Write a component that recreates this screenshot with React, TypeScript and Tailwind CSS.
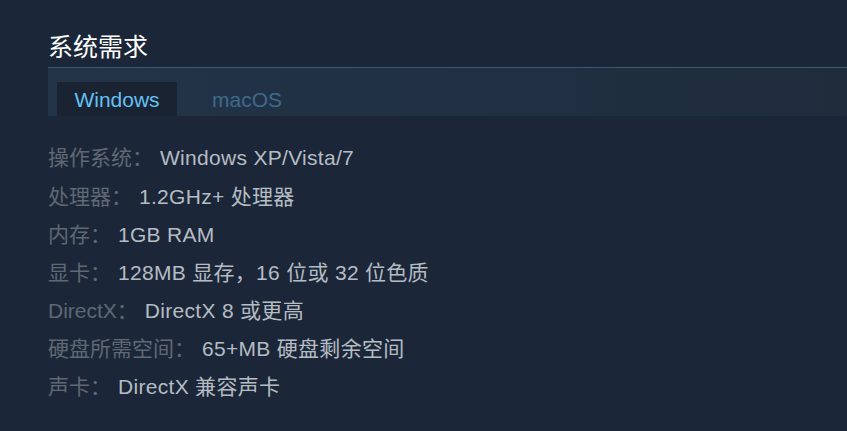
import React, { useState } from 'react';

const rows = [
    { label: '操作系统：', value: 'Windows XP/Vista/7' },
    { label: '处理器：', value: '1.2GHz+ 处理器' },
    { label: '内存：', value: '1GB RAM' },
    { label: '显卡：', value: '128MB 显存，16 位或 32 位色质' },
    { label: 'DirectX：', value: 'DirectX 8 或更高' },
    { label: '硬盘所需空间：', value: '65+MB 硬盘剩余空间' },
    { label: '声卡：', value: 'DirectX 兼容声卡' },
];

export default function App() {
    const [os, setOs] = useState<'win' | 'mac'>('win');

    return (
        <div
            className="min-h-[431px] w-full bg-[#1b2738] pt-[31px] pl-[48px] overflow-hidden"
            style={{ fontFamily: '"Liberation Sans", "Noto Sans CJK SC", sans-serif' }}
        >
            <h2 className="text-[25px] leading-[32px] text-white font-normal">系统需求</h2>

            <div className="mt-[4px] h-[49px] border-t border-[#3a5a76] bg-gradient-to-r from-[#233449] to-[#1e2c3c] pl-[9px] pt-[14px] flex items-stretch">
                <button
                    type="button"
                    onClick={() => setOs('win')}
                    className={`w-[120px] text-[21px] leading-none ${
                        os === 'win' ? 'bg-[#1a2331] text-[#66c0f4]' : 'text-[#3e6a8b]'
                    }`}
                >
                    Windows
                </button>
                <button
                    type="button"
                    onClick={() => setOs('mac')}
                    className={`w-[140px] text-[21px] leading-none ${
                        os === 'mac' ? 'bg-[#1a2331] text-[#66c0f4]' : 'text-[#3e6a8b]'
                    }`}
                >
                    macOS
                </button>
            </div>

            <ul className="pt-[23px]">
                {rows.map(r => (
                    <li key={r.label} className="flex items-center h-[38.2px] text-[21px]">
                        <span className="text-[#5f6873]">{r.label}</span>
                        <span className="ml-[7px] tracking-[0.3px] text-[#b5bcc3]">{r.value}</span>
                    </li>
                ))}
            </ul>
        </div>
    );
}
